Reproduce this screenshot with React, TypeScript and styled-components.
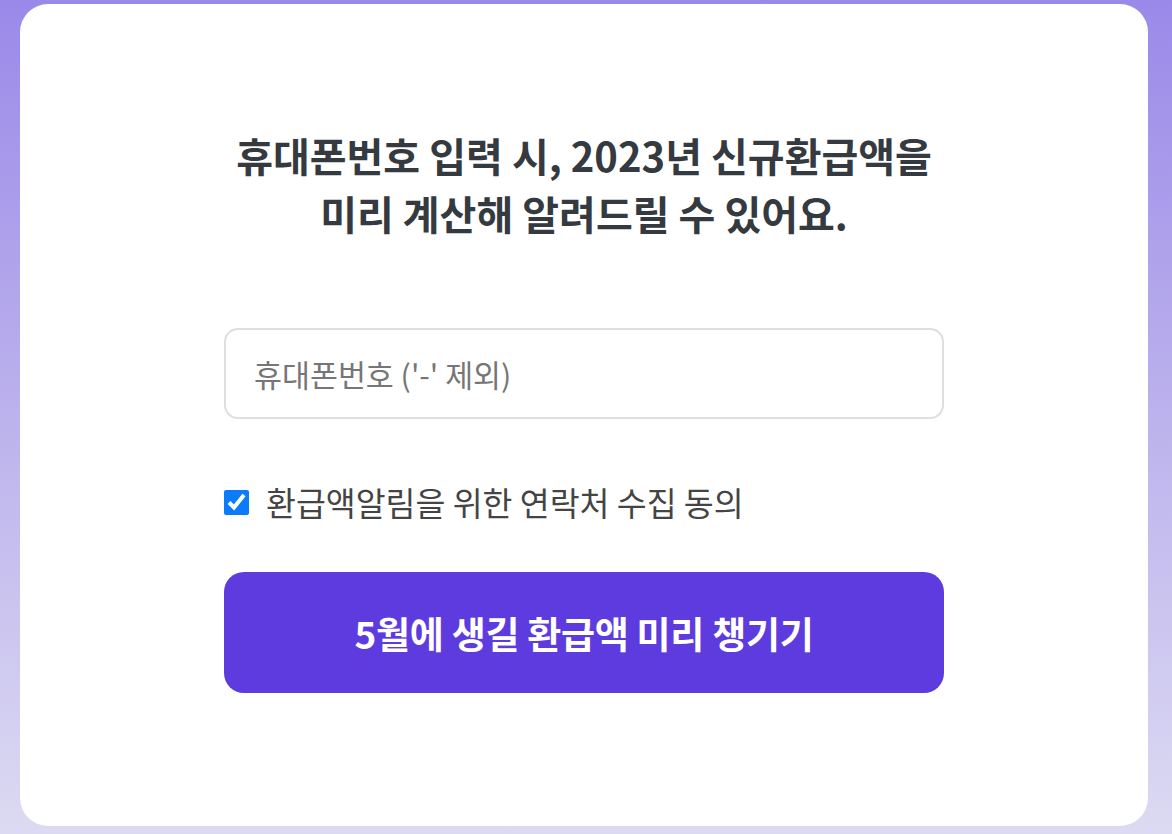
import React, { useState } from "react";
import styled, { createGlobalStyle } from "styled-components";

const Global = createGlobalStyle`
  html, body { margin: 0; padding: 0; }
  body {
    font-family: "Noto Sans CJK KR", "Noto Sans", sans-serif;
    background: linear-gradient(180deg, #9b89e9 0%, #b9aeec 45%, #dcdaf2 100%);
    min-height: 834px;
  }
  * { box-sizing: border-box; }
`;

const Page = styled.div`
  width: 1172px;
  height: 834px;
  padding: 4px 24px 8px 20px;
  display: flex;
`;

const Card = styled.main`
  flex: 1;
  background: #ffffff;
  border-radius: 28px;
  display: flex;
  flex-direction: column;
  align-items: center;
  padding-top: 122px;
`;

const Title = styled.h1`
  margin: 0;
  font-size: 40px;
  line-height: 58px;
  font-weight: 700;
  color: #343a40;
  text-align: center;
  letter-spacing: 0px;
`;

const Form = styled.form`
  width: 720px;
  display: flex;
  flex-direction: column;
  margin-top: 86px;
`;

const PhoneInput = styled.input`
  width: 100%;
  height: 91px;
  border: 2px solid #dedede;
  border-radius: 14px;
  padding: 0 28px;
  font-family: inherit;
  font-size: 30.4px;
  color: #333;
  outline: none;
  &::placeholder { color: #767676; }
`;

const CheckRow = styled.label`
  display: flex;
  align-items: center;
  gap: 17px;
  margin-top: 66px;
  font-size: 32.5px;
  color: #444;
  line-height: 34px;
`;

const Box = styled.input`
  width: 25px;
  height: 25px;
  margin: 0;
  accent-color: #0a7cf9;
`;

const Submit = styled.button`
  margin-top: 53px;
  height: 121px;
  width: 100%;
  border: none;
  border-radius: 20px;
  background: #5e3bde;
  color: #ffffff;
  font-family: inherit;
  font-size: 37px;
  font-weight: 700;
  letter-spacing: -0.3px;
  cursor: pointer;
`;

export default function App() {
  const [agree, setAgree] = useState(true);
  return (
    <>
      <Global />
      <Page>
        <Card>
          <Title>
            휴대폰번호 입력 시, 2023년 신규환급액을
            <br />
            미리 계산해 알려드릴 수 있어요.
          </Title>
          <Form onSubmit={(e) => e.preventDefault()}>
            <PhoneInput placeholder="휴대폰번호 ('-' 제외)" />
            <CheckRow>
              <Box type="checkbox" checked={agree} onChange={() => setAgree(!agree)} />
              환급액알림을 위한 연락처 수집 동의
            </CheckRow>
            <Submit type="submit">5월에 생길 환급액 미리 챙기기</Submit>
          </Form>
        </Card>
      </Page>
    </>
  );
}
